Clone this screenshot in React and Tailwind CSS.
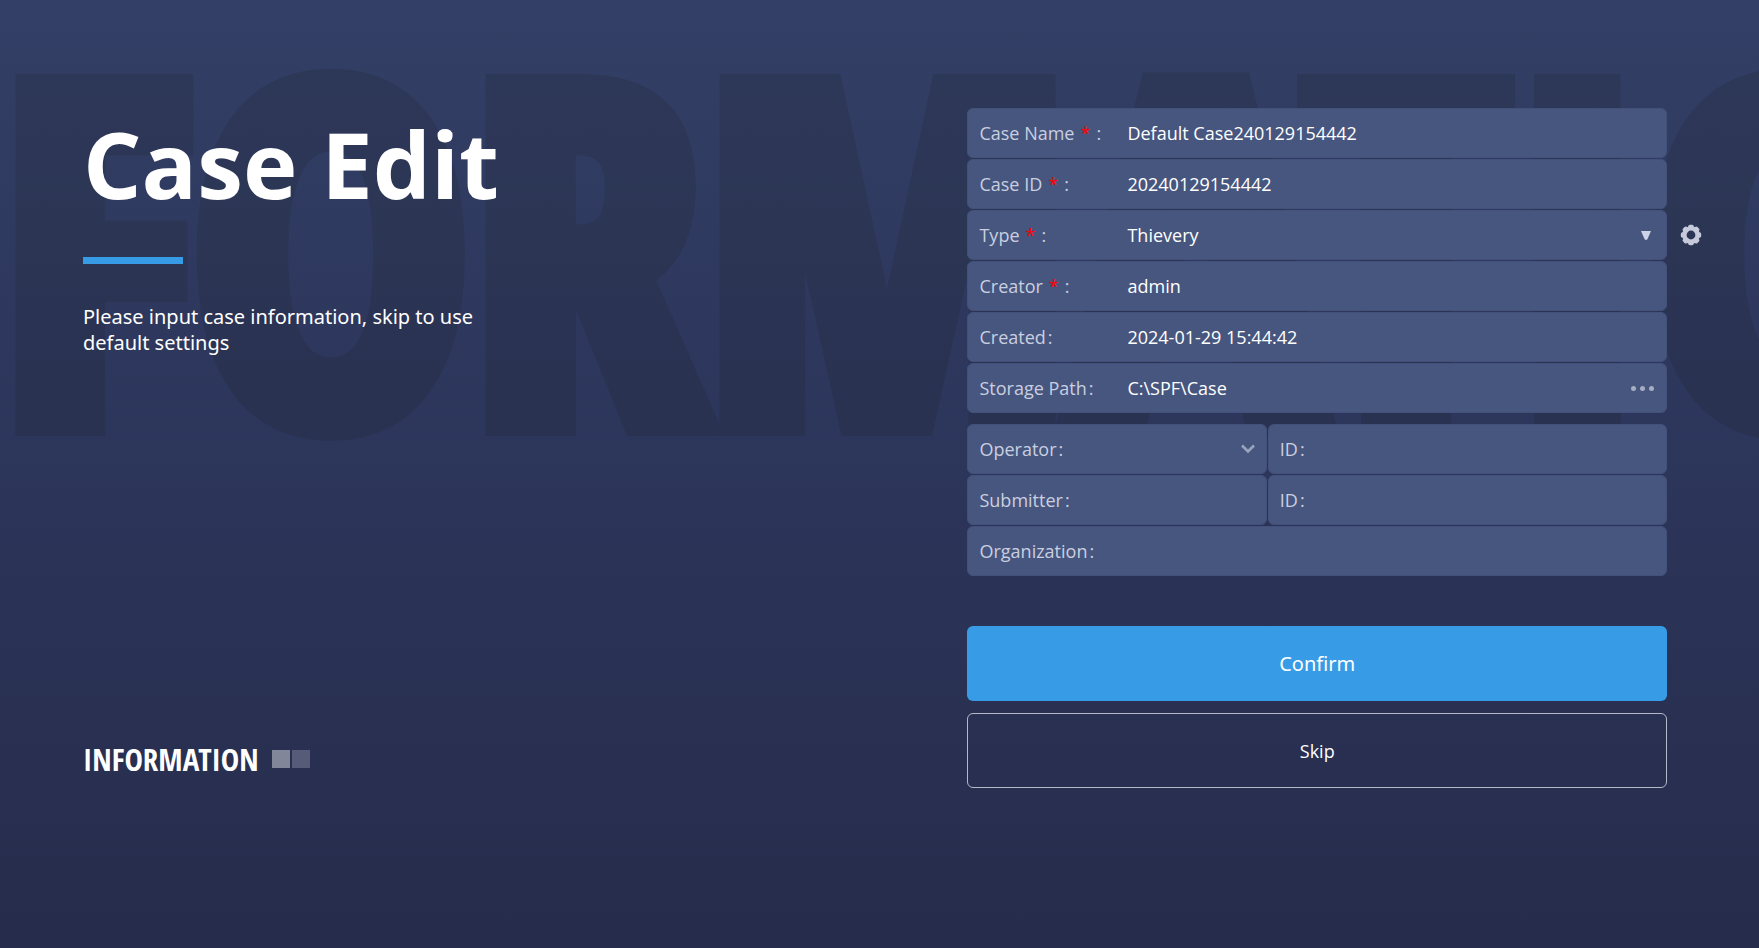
import React, { useState } from 'react';

const Field = ({ id, label, required, labelWidth = 'w-[148px]', className = '', children }) => (
  <div className={`flex h-[50px] min-w-0 items-center rounded-md border border-[#43517a] bg-[#47567e] pl-[11px] ${className}`}>
    <label htmlFor={id} className={`${labelWidth} shrink-0 whitespace-nowrap text-lg text-[#c9cfe0]`}>
      {label}
      {required && <span className="mx-[6px] text-[#ff0000]">*</span>}
      <span className={required ? '' : 'ml-[2px]'}>:</span>
    </label>
    {children}
  </div>
);

const inputStyle = 'h-full w-full min-w-0 flex-1 bg-transparent text-lg text-white outline-none';

const GearIcon = () => (
  <svg viewBox="0 0 22 22" className="h-[22px] w-[22px]" fill="#c6cadb">
    <path
      fillRule="evenodd"
      d="M11 2.2a8.8 8.8 0 1 0 0 17.6 8.8 8.8 0 0 0 0-17.6zm0 4.4a4.4 4.4 0 1 1 0 8.8 4.4 4.4 0 0 1 0-8.8z"
    />
    {[0, 45, 90, 135, 180, 225, 270, 315].map((angle) => (
      <rect key={angle} x="8.2" y="0.8" width="5.6" height="4.4" rx="1.8" transform={`rotate(${angle} 11 11)`} />
    ))}
  </svg>
);

const App = () => {
  const [form, setForm] = useState({
    name: 'Default Case240129154442',
    caseId: '20240129154442',
    type: 'Thievery',
    creator: 'admin',
    created: '2024-01-29 15:44:42',
    path: 'C:\\SPF\\Case',
    operator: '',
    operatorId: '',
    submitter: '',
    submitterId: '',
    organization: '',
  });

  const bind = (key) => ({
    id: key,
    value: form[key],
    onChange: (e) => setForm({ ...form, [key]: e.target.value }),
    className: inputStyle,
  });

  return (
    <div className="relative min-h-screen overflow-hidden bg-linear-to-b from-[#333f66] via-[#2c355a] to-[#262c4b] font-['Open_Sans','Noto_Sans',sans-serif] text-white">
      <div
        aria-hidden="true"
        className="pointer-events-none absolute inset-x-0 top-0 select-none whitespace-nowrap font-['Open_Sans_Condensed','Open_Sans',sans-serif] text-[468px] leading-[482px] font-bold text-[#1e2328] opacity-20 [-webkit-text-stroke:28px_#1e2328]"
      >
        FORMATIO
      </div>

      <div className="relative flex min-h-screen pt-[108px]">
        <section className="flex flex-1 flex-col self-start pl-[83px]">
          <h1 className="text-[92px] leading-[112px] font-bold">Case Edit</h1>
          <div className="mt-[37px] h-[7px] w-[100px] bg-[#389be6]" />
          <p className="mt-10 w-[420px] font-['Noto_Sans',sans-serif] text-xl leading-[26px]">
            Please input case information, skip to use default settings
          </p>
          <div className="mt-[383px] flex items-center gap-[13px]">
            <span className="font-['Open_Sans_Condensed','Open_Sans',sans-serif] text-[31px] leading-10 font-bold">
              INFORMATION
            </span>
            <div className="flex gap-[2px]">
              <div className="size-[18px] bg-[#828699]" />
              <div className="size-[18px] bg-[#565b78]" />
            </div>
          </div>
        </section>

        <form className="w-[45%] pr-[92px]" onSubmit={(e) => e.preventDefault()}>
          <div className="flex flex-col gap-px">
            <Field id="name" label="Case Name" required>
              <input {...bind('name')} />
            </Field>
            <Field id="caseId" label="Case ID" required>
              <input {...bind('caseId')} />
            </Field>
            <div className="-mr-[35px] flex items-center gap-[13px]">
              <Field id="type" label="Type" required className="flex-1 pr-[15px]">
                <select {...bind('type')} className={`${inputStyle} appearance-none`}>
                  <option>Thievery</option>
                </select>
                <svg viewBox="0 0 10 9" className="pointer-events-none h-[9px] w-[10px]" fill="#cdd3e6">
                  <path d="M0 0h10L6.4 8.2q-1.4 1.4-2.8 0z" />
                </svg>
              </Field>
              <button type="button" aria-label="Type settings">
                <GearIcon />
              </button>
            </div>
            <Field id="creator" label="Creator" required>
              <input {...bind('creator')} />
            </Field>
            <Field id="created" label="Created">
              <input {...bind('created')} />
            </Field>
            <Field id="path" label="Storage Path" className="pr-3">
              <input {...bind('path')} />
              <button type="button" aria-label="Browse" className="flex gap-[4px]">
                <span className="size-[5px] rounded-full bg-[#a6aec4]" />
                <span className="size-[5px] rounded-full bg-[#a6aec4]" />
                <span className="size-[5px] rounded-full bg-[#a6aec4]" />
              </button>
            </Field>
          </div>

          <div className="mt-[11px] grid grid-cols-[3fr_4fr] gap-px">
            <Field id="operator" label="Operator" labelWidth="w-[100px]" className="pr-[11px]">
              <input {...bind('operator')} />
              <button type="button" aria-label="Choose operator">
                <svg viewBox="0 0 14 10" className="h-[10px] w-[14px]" fill="none" stroke="#9aa4bd" strokeWidth="2.6">
                  <path d="M1 1.5l6 6 6-6" />
                </svg>
              </button>
            </Field>
            <Field id="operatorId" label="ID" labelWidth="w-[40px]">
              <input {...bind('operatorId')} />
            </Field>
            <Field id="submitter" label="Submitter" labelWidth="w-[100px]">
              <input {...bind('submitter')} />
            </Field>
            <Field id="submitterId" label="ID" labelWidth="w-[40px]">
              <input {...bind('submitterId')} />
            </Field>
            <Field id="organization" label="Organization" className="col-span-2">
              <input {...bind('organization')} />
            </Field>
          </div>

          <button type="submit" className="mt-[50px] h-[75px] w-full rounded-md bg-[#389be6] font-['Noto_Sans',sans-serif] text-xl">
            Confirm
          </button>
          <button type="button" className="mt-3 h-[75px] w-full rounded-md border border-[#b4b9c8] text-lg">
            Skip
          </button>
        </form>
      </div>
    </div>
  );
};

export default App;
